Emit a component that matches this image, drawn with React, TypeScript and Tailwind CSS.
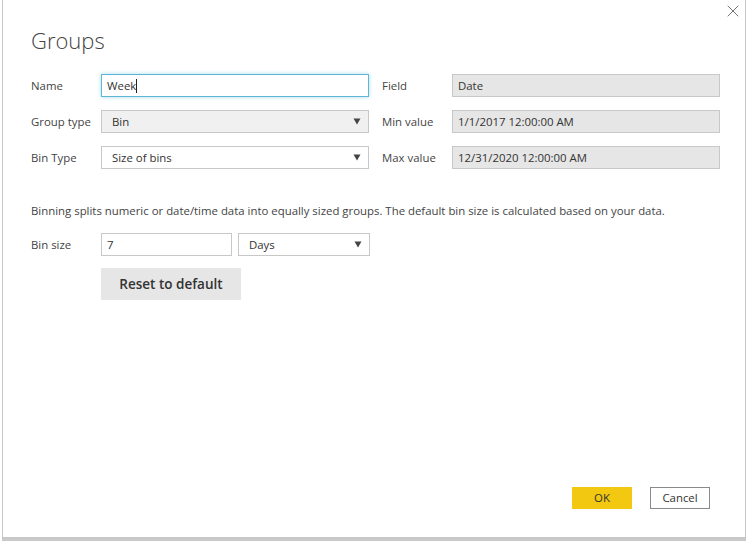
import { X } from "lucide-react";

function Caret() {
  return (
    <svg width="8" height="7" viewBox="0 0 8 7" className="shrink-0">
      <path d="M0.5 0.5 H7.5 L4 6.5 Z" fill="#444" />
    </svg>
  );
}

function Label({ children }: { children: React.ReactNode }) {
  return <div className="w-[70px] shrink-0 text-[11.4px] text-[#444]">{children}</div>;
}

function SelectBox({ value, gray, width }: { value: string; gray?: boolean; width: string }) {
  return (
    <div
      className={`${width} h-[23px] flex items-center justify-between pl-[10px] pr-[7px] border border-[#c8c8c8] text-[11.4px] text-[#333] ${
        gray ? "bg-[#f0f0f0]" : "bg-white"
      }`}
    >
      <span>{value}</span>
      <Caret />
    </div>
  );
}

function ReadOnly({ value }: { value: string }) {
  return (
    <div className="w-[268px] h-[23px] flex items-center pl-[5px] border border-[#c8c8c8] bg-[#e6e6e6] text-[11.4px] text-[#333]">
      {value}
    </div>
  );
}

export default function App() {
  return (
    <div className="w-[749px] h-[546px] bg-white" style={{ fontFamily: '"Open Sans", "Noto Sans", sans-serif' }}>
      <div className="ml-[2px] w-[744px] h-[538px] border-l border-r border-b border-[#c6c6c6] shadow-[0_3px_0_#c9c9c9] flex flex-col relative">
        <button className="absolute right-[2px] top-[1px] text-[#666]">
          <X size={20} strokeWidth={1.1} />
        </button>

        <h1 className="ml-[28px] mt-[26px] text-[22px] font-light text-[#444] leading-[28px]">Groups</h1>

        <div className="ml-[28px] mt-[20px] flex gap-[13px]">
          <div className="flex flex-col gap-[13px]">
            <div className="flex items-center">
              <Label>Name</Label>
              <div className="w-[268px] h-[23px] flex items-center pl-[5px] border border-[#5fb7d5] shadow-[0_0_4px_#a6d9ea] text-[11.4px] text-[#333]">
                Week<span className="w-px h-[14px] bg-[#222]" />
              </div>
            </div>
            <div className="flex items-center">
              <Label>Group type</Label>
              <SelectBox value="Bin" gray width="w-[268px]" />
            </div>
            <div className="flex items-center">
              <Label>Bin Type</Label>
              <SelectBox value="Size of bins" width="w-[268px]" />
            </div>
          </div>
          <div className="flex flex-col gap-[13px]">
            <div className="flex items-center">
              <Label>Field</Label>
              <ReadOnly value="Date" />
            </div>
            <div className="flex items-center">
              <Label>Min value</Label>
              <ReadOnly value="1/1/2017 12:00:00 AM" />
            </div>
            <div className="flex items-center">
              <Label>Max value</Label>
              <ReadOnly value="12/31/2020 12:00:00 AM" />
            </div>
          </div>
        </div>

        <p className="ml-[28px] mt-[34px] text-[11.4px] text-[#444] leading-[16px]">
          Binning splits numeric or date/time data into equally sized groups. The default bin size is calculated based on your data.
        </p>

        <div className="ml-[28px] mt-[14px] flex items-center">
          <Label>Bin size</Label>
          <div className="w-[131px] h-[23px] flex items-center pl-[5px] border border-[#c8c8c8] text-[11.4px] text-[#333]">7</div>
          <div className="ml-[6px]">
            <SelectBox value="Days" width="w-[132px]" />
          </div>
        </div>

        <div className="ml-[98px] mt-[12px]">
          <button className="w-[140px] h-[32px] bg-[#e6e6e6] text-[13.5px] font-semibold text-[#333]">Reset to default</button>
        </div>

        <div className="flex-1" />

        <div className="flex justify-end gap-[18px] pr-[35px] pb-[28px]">
          <button className="w-[60px] h-[22px] bg-[#f2c811] text-[11.4px] text-[#333]">OK</button>
          <button className="w-[60px] h-[22px] border border-[#8a8a8a] bg-white text-[11.4px] text-[#333]">Cancel</button>
        </div>
      </div>
    </div>
  );
}
